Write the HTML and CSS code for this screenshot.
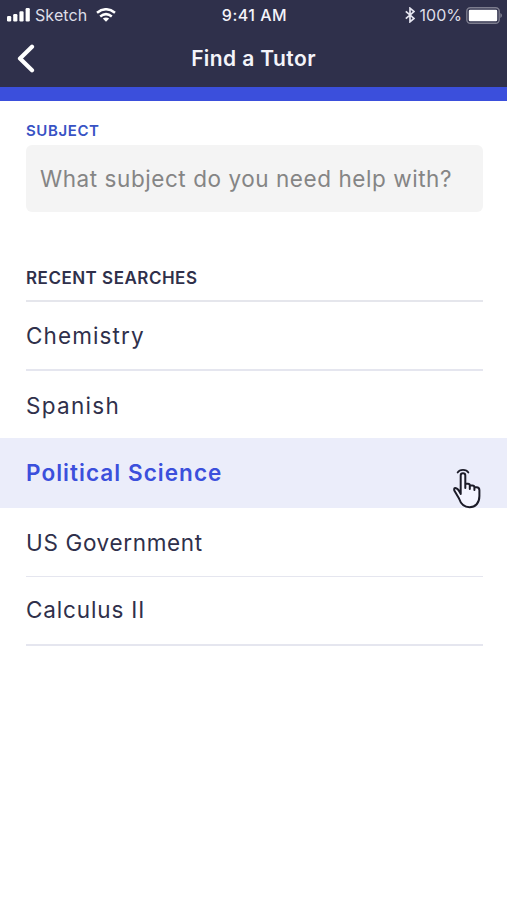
FILE: index.html
```html
<!DOCTYPE html>
<html lang="en">
<head>
<meta charset="utf-8">
<title>Find a Tutor</title>
<link rel="stylesheet" href="styles.css">
</head>
<body>
<header class="header">
  <div class="status">
    <div class="status-left">
      <svg class="signal" width="23" height="14" viewBox="0 0 23 14" fill="#fff"><rect x="0" y="8" width="4.2" height="5.5" rx="1.2"/><rect x="6.2" y="6" width="4.2" height="7.5" rx="1.2"/><rect x="12.4" y="3.2" width="4.2" height="10.3" rx="1.2"/><rect x="18.6" y="0" width="4.2" height="13.5" rx="1.2"/></svg>
      <span class="carrier">Sketch</span>
      <svg class="wifi" width="20" height="14" viewBox="0 0 20 14" fill="none" stroke="#fff" stroke-width="2.5"><path d="M1 4.8Q10-2.3 19 4.8M4.2 8.4Q10 3.8 15.8 8.4"/><path d="M6.8 10.5Q10 8.3 13.2 10.5L10 13.7Z" fill="#fff" stroke="none"/></svg>
    </div>
    <span class="time">9:41 AM</span>
    <div class="status-right">
      <svg class="bluetooth" width="10" height="16" viewBox="0 0 10 16" fill="none" stroke="#e6e6f0" stroke-width="1.7"><path d="M.8 4.3 9 11.4 5 14.8V1.2L9 4.6.8 11.7"/></svg>
      <span class="percent">100%</span>
      <svg class="battery" width="36" height="17" viewBox="0 0 36 17"><rect x=".8" y=".8" width="32.4" height="15.4" rx="3.5" fill="none" stroke="#7d7d8e" stroke-width="1.4"/><rect x="2.8" y="2.8" width="28.4" height="11.4" rx="1.3" fill="#fff"/><path d="M34.3 6v5q1.7-.8 1.7-2.5T34.3 6Z" fill="#7d7d8e"/></svg>
    </div>
  </div>
  <div class="nav">
    <svg class="back" width="18" height="30" viewBox="0 0 18 30" fill="none" stroke="#fff" stroke-width="4.2" stroke-linecap="round" stroke-linejoin="round"><path d="M15 2.8 3 14.5l12 11.7"/></svg>
    <h1 class="title">Find a Tutor</h1>
    <span></span>
  </div>
</header>
<main>
  <section class="search">
    <label class="label" for="subject">SUBJECT</label>
    <input class="field" id="subject" type="text" placeholder="What subject do you need help with?">
  </section>
  <h2 class="recent-title">RECENT SEARCHES</h2>
  <ul class="recent">
    <li class="row chemistry"><span>Chemistry</span></li>
    <li class="row spanish"><span>Spanish</span></li>
    <li class="row active"><span>Political Science</span>
      <svg class="hand" width="30" height="43" viewBox="0 0 30 43" fill="none" stroke="#1c1c28" stroke-width="2" stroke-linecap="round" stroke-linejoin="round"><path d="M5.6 5.5Q7.2 2.8 11 2.8t5.4 2.7" stroke-width="1.7"/><path d="M8.7 25V8.5a2.3 2.3 0 0 1 4.6 0V21v-4.3h2.7q1.8 0 1.8 1.8V22v-3.5h2.6q2 0 2 2V23v-2.8h2q3 0 3 3V29c0 7-4 11.2-9.8 11.2-6.6 0-9.1-4.2-10.7-9L2.3 23.500q-.7-3 1.7-2.300 2.700.8 4.700 5.800Z" fill="#f4f5ff"/></svg>
    </li>
    <li class="row government"><span>US Government</span></li>
    <li class="row calculus"><span>Calculus II</span></li>
  </ul>
</main>
</body>
</html>
```
FILE: styles.css
```css
* { box-sizing: border-box; }
body { margin: 0; min-height: 900px; background: #fff; color: #2f304b; font-family: Inter, "Liberation Sans", sans-serif; }
svg { display: block; flex: none; }
.header { height: 101px; background: #2f304b; border-bottom: 14px solid #3b4fdc; color: #f4f4fa; }
.status { height: 30px; padding: 0 5px 0 7px; display: grid; grid-template-columns: 1fr auto 1fr; align-items: center; font-size: 16px; line-height: 28px; }
.status-left, .status-right { display: flex; align-items: center; }
.status-right { justify-content: flex-end; }
.carrier { margin-left: 5px; color: #dedee8; letter-spacing: .1px; }
.wifi { margin-left: 9px; }
.time { font-weight: 500; font-size: 16px; letter-spacing: .5px; }
.percent { margin: 0 4px 0 5px; color: #dedee8; }
.nav { height: 57px; padding: 0 17px; display: grid; grid-template-columns: 1fr auto 1fr; align-items: center; }
.title { margin: 0; font-size: 21px; font-weight: 600; letter-spacing: .4px; }
.search { padding: 20px 24px 0 26px; }
.label { display: block; height: 24px; font-size: 15px; line-height: 20px; font-weight: 600; letter-spacing: .6px; color: #3852c4; }
.field { display: block; width: 100%; height: 67px; padding: 0 14px 1px; border: 0; border-radius: 6px; background: #f4f4f4; font: 400 22.5px Inter, sans-serif; letter-spacing: .56px; }
.field::placeholder { color: #858585; opacity: 1; }
.recent-title { margin: 54px 24px 0 26px; height: 36px; border-bottom: 2px solid #e5e6ec; font-size: 17px; line-height: 24px; font-weight: 600; letter-spacing: .5px; }
.recent { margin: 0; padding: 0; list-style: none; font-size: 22.5px; letter-spacing: 1.1px; }
.row { height: 69px; margin: 0 24px 0 26px; display: flex; align-items: center; border-bottom: 2px solid #e5e6ef; }
.chemistry { padding-bottom: 1px; }
.spanish { height: 67px; padding-top: 1px; border: 0; letter-spacing: 1.3px; }
.active { height: 70px; margin: 0; padding: 0 25px 0 26px; justify-content: space-between; border: 0; background: #ebedfa; color: #3b4fdc; font-weight: 600; letter-spacing: 1.05px; }
.active span { padding-bottom: 1px; }
.hand { margin-top: 31px; }
.government { border-bottom-width: 1px; letter-spacing: .65px; }
.calculus { padding-bottom: 2px; letter-spacing: .85px; }
```
